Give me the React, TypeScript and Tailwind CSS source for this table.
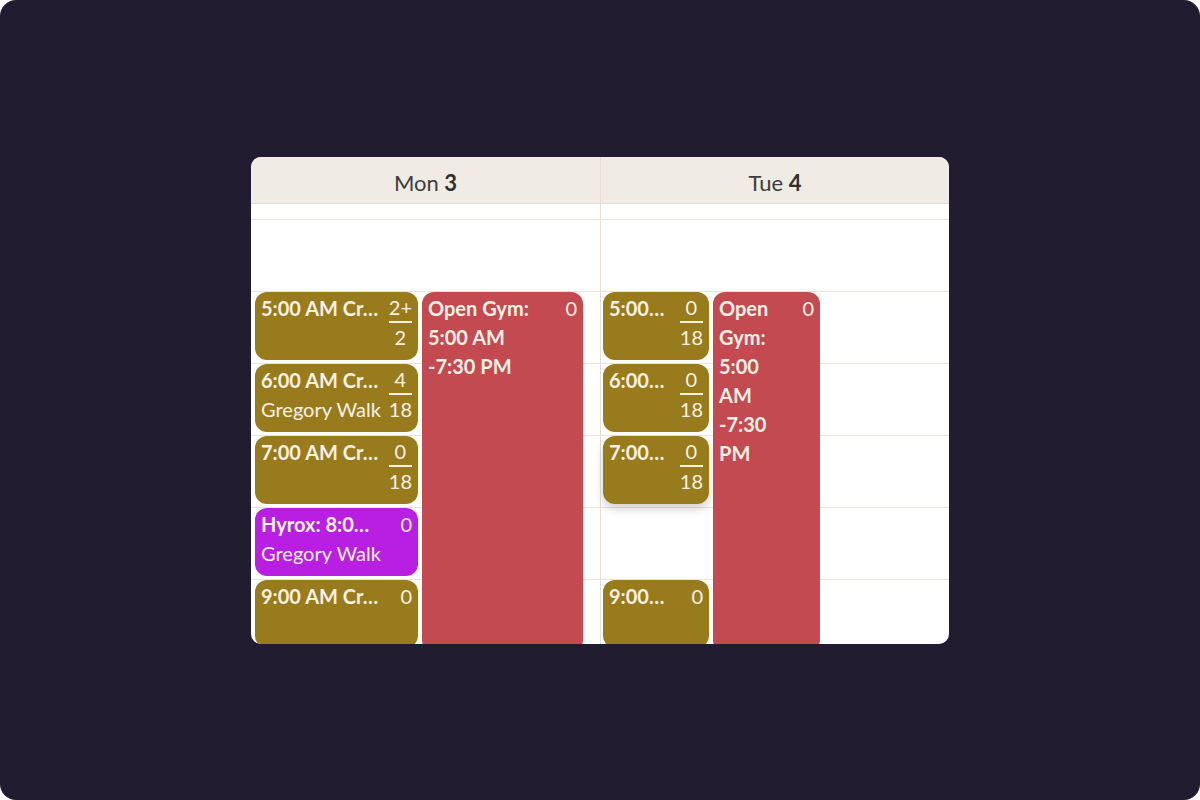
import React from 'react'

type Ev = {
  row: number
  col: 'a' | 'b'
  color: string
  lines: string[]
  sub?: string
  top: string
  bottom?: string
  span?: boolean
  shadow?: boolean
}

const monEvents: Ev[] = [
  { row: 3, col: 'a', color: 'bg-[#987b1d]', lines: ['5:00 AM Cr…'], top: '2+', bottom: '2' },
  { row: 4, col: 'a', color: 'bg-[#987b1d]', lines: ['6:00 AM Cr…'], sub: 'Gregory Walk', top: '4', bottom: '18' },
  { row: 5, col: 'a', color: 'bg-[#987b1d]', lines: ['7:00 AM Cr…'], top: '0', bottom: '18' },
  { row: 6, col: 'a', color: 'bg-[#b81fe2]', lines: ['Hyrox: 8:0…'], sub: 'Gregory Walk', top: '0' },
  { row: 7, col: 'a', color: 'bg-[#987b1d]', lines: ['9:00 AM Cr…'], top: '0' },
  { row: 3, col: 'b', color: 'bg-[#c34a51]', lines: ['Open Gym:', '5:00 AM', '-7:30 PM'], top: '0', span: true },
]

const tueEvents: Ev[] = [
  { row: 3, col: 'a', color: 'bg-[#987b1d]', lines: ['5:00…'], top: '0', bottom: '18' },
  { row: 4, col: 'a', color: 'bg-[#987b1d]', lines: ['6:00…'], top: '0', bottom: '18' },
  { row: 5, col: 'a', color: 'bg-[#987b1d]', lines: ['7:00…'], top: '0', bottom: '18', shadow: true },
  { row: 7, col: 'a', color: 'bg-[#987b1d]', lines: ['9:00…'], top: '0' },
  { row: 3, col: 'b', color: 'bg-[#c34a51]', lines: ['Open', 'Gym:', '5:00', 'AM', '-7:30', 'PM'], top: '0', span: true },
]

const rowStart: Record<number, string> = {
  3: 'row-start-3',
  4: 'row-start-4',
  5: 'row-start-5',
  6: 'row-start-6',
  7: 'row-start-7',
}

function EventCard({ ev }: { ev: Ev }) {
  return (
    <div
      className={`${ev.color} ${rowStart[ev.row]} ${ev.col === 'a' ? 'col-start-2' : 'col-start-4'} ${
        ev.span ? 'row-end-8' : 'h-[68px] self-start'
      } ${ev.shadow ? 'shadow-[0_5px_10px_rgba(0,0,0,0.18)]' : ''} rounded-xl flex justify-between gap-[6px] pl-[6px] pr-[6px] pt-[2px] text-[#f8f0e4] leading-[29px] overflow-hidden`}
    >
      <div className="min-w-0 whitespace-nowrap">
        {ev.lines.map((l, i) => (
          <div key={i} className="font-bold">{l}</div>
        ))}
        {ev.sub && <div>{ev.sub}</div>}
      </div>
      <div className="flex flex-col items-stretch text-center">
        <div className={ev.bottom ? 'border-b-2 border-[#f8f0e4] leading-[27px]' : ''}>{ev.top}</div>
        {ev.bottom && <div className="leading-[29px]">{ev.bottom}</div>}
      </div>
    </div>
  )
}

function DayColumn({ events, cols }: { events: Ev[]; cols: string }) {
  return (
    <div className={`grid ${cols} grid-rows-[16px_repeat(6,72px)]`}>
      <div className="col-span-full row-start-1 border-b border-[#ebe2d9]" />
      <div className="col-span-full row-start-2 border-b border-[#ebe2d9]" />
      <div className="col-span-full row-start-3 border-b border-[#ebe2d9]" />
      <div className="col-span-full row-start-4 border-b border-[#ebe2d9]" />
      <div className="col-span-full row-start-5 border-b border-[#ebe2d9]" />
      <div className="col-span-full row-start-6 border-b border-[#ebe2d9]" />
      <div className="col-span-full row-start-7 border-b border-[#ebe2d9]" />
      {events.map((ev, i) => (
        <EventCard key={i} ev={ev} />
      ))}
    </div>
  )
}

export default function App() {
  return (
    <div className="w-[1200px] h-[800px] bg-white">
      <div
        className="w-full h-full rounded-2xl bg-[#221c31] flex items-center justify-center"
        style={{ fontFamily: 'Lato, "Noto Sans", sans-serif' }}
      >
        <div className="w-[698px] h-[487px] bg-white rounded-[10px] overflow-hidden flex flex-col text-[20px]">
          <div className="grid grid-cols-[350px_348px] h-[47px] shrink-0 bg-[#f0ebe5] border-b border-[#e8ded4] text-[22px] text-[#3d3d3d]">
            <div className="flex items-center justify-center pt-[5px] border-r border-[#e6ddd3]">
              <span>
                Mon <b className="font-bold text-[#2f2f2f]">3</b>
              </span>
            </div>
            <div className="flex items-center justify-center pt-[5px]">
              <span>
                Tue <b className="font-bold text-[#2f2f2f]">4</b>
              </span>
            </div>
          </div>
          <div className="grid grid-cols-[350px_348px] flex-1 overflow-hidden">
            <div className="border-r border-[#e8dfd6]">
              <DayColumn events={monEvents} cols="grid-cols-[4px_163px_4px_161px_1fr]" />
            </div>
            <div>
              <DayColumn events={tueEvents} cols="grid-cols-[2px_106px_4px_107px_1fr]" />
            </div>
          </div>
        </div>
      </div>
    </div>
  )
}
